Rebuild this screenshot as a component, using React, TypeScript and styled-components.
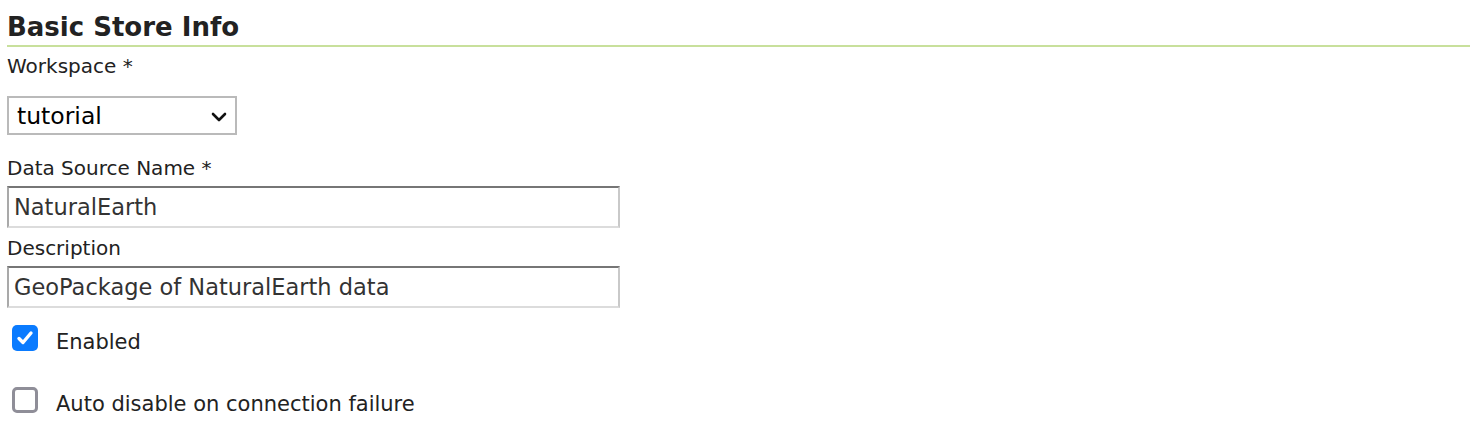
import React from "react";
import styled, { createGlobalStyle } from "styled-components";

const Global = createGlobalStyle`
  html, body { margin: 0; padding: 0; background: #fff; }
  body { font-family: "DejaVu Sans", Verdana, sans-serif; color: #222; }
`;

const Page = styled.div`
  padding: 12px 14px 0 7px;
`;

const Heading = styled.h2`
  margin: 0;
  font-size: 26px;
  line-height: 30px;
  font-weight: bold;
  color: #222;
  padding-bottom: 3px;
  border-bottom: 2px solid #c8e09c;
`;

const Form = styled.div`
  display: flex;
  flex-direction: column;
  align-items: flex-start;
`;

const Label = styled.label<{ $top: number }>`
  display: block;
  font-size: 20px;
  line-height: 24px;
  color: #222;
  margin-top: ${(p) => p.$top}px;
`;

const SelectBox = styled.div`
  position: relative;
  margin-top: 18px;
  width: 230px;
  height: 39px;
  box-sizing: border-box;
  border: 2px solid #bababa;
  background: #fff;
  display: flex;
  align-items: center;
  padding-left: 8px;
  font-size: 23.5px;
  color: #000;
`;

const Chevron = styled.svg`
  position: absolute;
  right: 8px;
  top: 14px;
`;

const TextInput = styled.input`
  margin-top: 6px;
  width: 613px;
  height: 42px;
  box-sizing: border-box;
  border-style: solid;
  border-width: 2px;
  border-color: #767676 #c9c9c9 #dcdcdc #a9a9a9;
  padding: 0 5px;
  font-family: "DejaVu Sans", Verdana, sans-serif;
  font-size: 22.5px;
  color: #333;
  background: #fff;
  outline: none;
`;

const CheckRow = styled.div<{ $top: number }>`
  display: flex;
  align-items: flex-start;
  margin-top: ${(p) => p.$top}px;
  padding-left: 5px;
`;

const Box = styled.span<{ $checked: boolean }>`
  width: 26px;
  height: 26px;
  box-sizing: border-box;
  border-radius: 5px;
  display: flex;
  align-items: center;
  justify-content: center;
  background: ${(p) => (p.$checked ? "#0a7bff" : "#fff")};
  border: ${(p) => (p.$checked ? "none" : "3px solid #8f8e98")};
  flex-shrink: 0;
`;

const CheckText = styled.span`
  margin-left: 18px;
  padding-top: 5px;
  font-size: 21px;
  line-height: 24px;
  color: #222;
`;

function Checkbox({ checked, label, top }: { checked: boolean; label: string; top: number }) {
  return (
    <CheckRow $top={top}>
      <Box $checked={checked}>
        {checked && (
          <svg width="20" height="20" viewBox="0 0 20 20">
            <path d="M4 10.5 L8 14.5 L16 5" fill="none" stroke="#fff" strokeWidth="3.4" strokeLinecap="round" strokeLinejoin="round" />
          </svg>
        )}
      </Box>
      <CheckText>{label}</CheckText>
    </CheckRow>
  );
}

export default function App() {
  return (
    <>
      <Global />
      <Page>
        <Heading>Basic Store Info</Heading>
        <Form>
          <Label $top={7}>Workspace *</Label>
          <SelectBox>
            tutorial
            <Chevron width="16" height="10" viewBox="0 0 16 10">
              <path d="M2 2 L8 8 L14 2" fill="none" stroke="#111" strokeWidth="2.6" strokeLinecap="round" strokeLinejoin="round" />
            </Chevron>
          </SelectBox>
          <Label $top={21}>Data Source Name *</Label>
          <TextInput defaultValue="NaturalEarth" />
          <Label $top={8}>Description</Label>
          <TextInput defaultValue="GeoPackage of NaturalEarth data" />
          <Checkbox checked label="Enabled" top={17} />
          <Checkbox checked={false} label="Auto disable on connection failure" top={33} />
        </Form>
      </Page>
    </>
  );
}
